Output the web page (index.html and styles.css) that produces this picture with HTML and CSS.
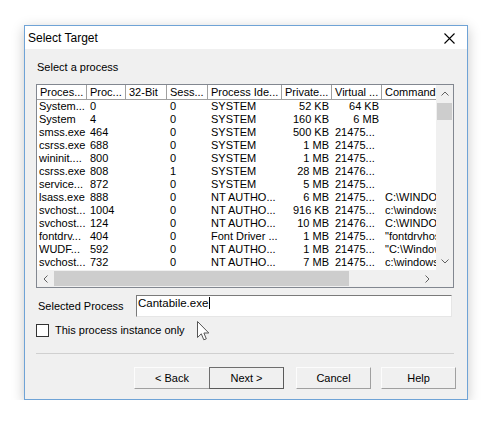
FILE: index.html
```html
<!DOCTYPE html>
<html>
<head>
<meta charset="utf-8">
<link rel="stylesheet" href="styles.css">
</head>
<body>
<div class="window">
  <div class="titlebar">
    <span class="title">Select Target</span>
    <svg class="close" width="11" height="11" viewBox="0 0 11 11"><path d="M0.5 0.5 L10.5 10.5 M10.5 0.5 L0.5 10.5" stroke="#000" stroke-width="1.1" fill="none"/></svg>
  </div>
  <div class="body">
    <div class="caption">Select a process</div>
    <div class="listview">
      <div class="main">
        <div class="row header">
          <div class="c">Proces...</div>
          <div class="c">Proc...</div>
          <div class="c">32-Bit</div>
          <div class="c">Sess...</div>
          <div class="c">Process Ide...</div>
          <div class="c">Private...</div>
          <div class="c">Virtual ...</div>
          <div class="c">Command</div>
        </div>
        <div class="rows">
          <div class="row"><div class="c">System...</div><div class="c">0</div><div class="c"></div><div class="c">0</div><div class="c">SYSTEM</div><div class="c r">52 KB</div><div class="c r">64 KB</div><div class="c"></div></div>
          <div class="row"><div class="c">System</div><div class="c">4</div><div class="c"></div><div class="c">0</div><div class="c">SYSTEM</div><div class="c r">160 KB</div><div class="c r">6 MB</div><div class="c"></div></div>
          <div class="row"><div class="c">smss.exe</div><div class="c">464</div><div class="c"></div><div class="c">0</div><div class="c">SYSTEM</div><div class="c r">500 KB</div><div class="c">21475...</div><div class="c"></div></div>
          <div class="row"><div class="c">csrss.exe</div><div class="c">688</div><div class="c"></div><div class="c">0</div><div class="c">SYSTEM</div><div class="c r">1 MB</div><div class="c">21475...</div><div class="c"></div></div>
          <div class="row"><div class="c">wininit....</div><div class="c">800</div><div class="c"></div><div class="c">0</div><div class="c">SYSTEM</div><div class="c r">1 MB</div><div class="c">21475...</div><div class="c"></div></div>
          <div class="row"><div class="c">csrss.exe</div><div class="c">808</div><div class="c"></div><div class="c">1</div><div class="c">SYSTEM</div><div class="c r">28 MB</div><div class="c">21476...</div><div class="c"></div></div>
          <div class="row"><div class="c">service...</div><div class="c">872</div><div class="c"></div><div class="c">0</div><div class="c">SYSTEM</div><div class="c r">5 MB</div><div class="c">21475...</div><div class="c"></div></div>
          <div class="row"><div class="c">lsass.exe</div><div class="c">888</div><div class="c"></div><div class="c">0</div><div class="c">NT AUTHO...</div><div class="c r">6 MB</div><div class="c">21475...</div><div class="c">C:\WINDOWS\system32\lsass.exe</div></div>
          <div class="row"><div class="c">svchost...</div><div class="c">1004</div><div class="c"></div><div class="c">0</div><div class="c">NT AUTHO...</div><div class="c r">916 KB</div><div class="c">21475...</div><div class="c">c:\windows\system32\svchost.exe</div></div>
          <div class="row"><div class="c">svchost...</div><div class="c">124</div><div class="c"></div><div class="c">0</div><div class="c">NT AUTHO...</div><div class="c r">10 MB</div><div class="c">21476...</div><div class="c">C:\WINDOWS\system32\svchost.exe</div></div>
          <div class="row"><div class="c">fontdrv...</div><div class="c">404</div><div class="c"></div><div class="c">0</div><div class="c">Font Driver ...</div><div class="c r">1 MB</div><div class="c">21475...</div><div class="c">"fontdrvhost.exe"</div></div>
          <div class="row"><div class="c">WUDF...</div><div class="c">592</div><div class="c"></div><div class="c">0</div><div class="c">NT AUTHO...</div><div class="c r">1 MB</div><div class="c">21475...</div><div class="c">"C:\Windows\System32\WUDFHost.exe"</div></div>
          <div class="row"><div class="c">svchost...</div><div class="c">732</div><div class="c"></div><div class="c">0</div><div class="c">NT AUTHO...</div><div class="c r">7 MB</div><div class="c">21475...</div><div class="c">c:\windows\system32\svchost.exe</div></div>
        </div>
      </div>
      <div class="vscroll">
        <div class="arrow"><svg width="8" height="5" viewBox="0 0 8 5"><path d="M0.5 4.5 L4 1 L7.5 4.5" stroke="#606060" fill="none"/></svg></div>
        <div class="vthumb"></div>
        <div class="vtrack"></div>
        <div class="arrow"><svg width="8" height="5" viewBox="0 0 8 5"><path d="M0.5 0.5 L4 4 L7.5 0.5" stroke="#606060" fill="none"/></svg></div>
      </div>
      <div class="hscroll">
        <div class="arrow"><svg width="5" height="8" viewBox="0 0 5 8"><path d="M4.5 0.5 L1 4 L4.5 7.5" stroke="#606060" fill="none"/></svg></div>
        <div class="hthumb"></div>
        <div class="htrack"></div>
        <div class="arrow"><svg width="5" height="8" viewBox="0 0 5 8"><path d="M0.5 0.5 L4 4 L0.5 7.5" stroke="#606060" fill="none"/></svg></div>
      </div>
      <div class="corner"></div>
    </div>
    <div class="selected">
      <span class="sel-label">Selected Process</span>
      <div class="textbox">Cantabile.exe<span class="caret"></span></div>
    </div>
    <div class="check-row">
      <span class="checkbox"></span>
      <span class="check-label">This process instance only</span>
    </div>
    <div class="separator"></div>
    <div class="buttons">
      <div class="btn back">&lt; Back</div>
      <div class="btn default">Next &gt;</div>
      <div class="btn cancel">Cancel</div>
      <div class="btn help">Help</div>
    </div>
  </div>
  <svg class="cursor" width="13" height="21" viewBox="0 0 13 21"><path d="M0.5 0.5 L0.5 16.5 L4.3 12.8 L6.8 18.8 L9.3 17.8 L6.9 12 L11.8 12 Z" fill="#fff" stroke="#555" stroke-width="1" stroke-linejoin="miter"/></svg>
</div>
</body>
</html>
```

FILE: styles.css
```css
html, body {
  margin: 0;
  padding: 0;
  background: #ffffff;
}

body {
  font-family: "Liberation Sans", Arial, sans-serif;
  font-size: 11px;
  color: #000;
}

.window {
  position: relative;
  margin: 25px 0 0 24px;
  width: 442px;
  border: 1px solid #6fa3d6;
  box-shadow: 0 3px 12px rgba(0, 0, 0, 0.22);
}

.titlebar {
  height: 23px;
  background: #fff;
  display: flex;
  align-items: center;
  justify-content: space-between;
  padding: 0 12px 0 3px;
}

.title {
  font-size: 12px;
  line-height: 14px;
  padding-top: 1px;
}

.close {
  display: block;
  margin-top: 1px;
}

.body {
  background: #f0f0f0;
  padding: 12px 13px 10px 11px;
}

.caption {
  line-height: 13px;
  padding-left: 1px;
}

.listview {
  margin-top: 10px;
  width: 416px;
  border: 1px solid #828790;
  background: #fff;
  display: grid;
  grid-template-columns: 399px 17px;
  grid-template-rows: 185px 17px;
}

.main {
  overflow: hidden;
  background: #fff;
}

.row {
  display: grid;
  grid-template-columns: 50px 39px 41px 41px 74px 50px 50px 320px;
  height: 13px;
  line-height: 13px;
  white-space: nowrap;
}

.row .c {
  overflow: hidden;
  padding: 0 3px;
}

.row .c:first-child {
  padding-left: 2px;
}

.row .c.r {
  text-align: right;
}

.header {
  height: 14px;
  line-height: 14px;
  border-bottom: 1px solid #a0a0a0;
}

.header .c {
  border-right: 1px solid #a0a0a0;
  padding: 0 3px 0 3px;
}

.header .c:first-child {
  padding-left: 3px;
}

.vscroll {
  background: #f0f0f0;
  display: flex;
  flex-direction: column;
}

.vscroll .arrow {
  height: 17px;
  display: flex;
  align-items: center;
  justify-content: center;
}

.vthumb {
  height: 17px;
  background: #cdcdcd;
  margin: 1px 1px 0 1px;
}

.vtrack {
  flex: 1;
}

.hscroll {
  background: #f0f0f0;
  display: flex;
}

.hscroll .arrow {
  width: 17px;
  display: flex;
  align-items: center;
  justify-content: center;
}

.hthumb {
  width: 295px;
  background: #cdcdcd;
  margin: 1px 0;
}

.htrack {
  flex: 1;
}

.corner {
  background: #f0f0f0;
}

.selected {
  margin-top: 7px;
  display: flex;
  align-items: center;
}

.sel-label {
  width: 100px;
  padding-left: 2px;
  box-sizing: border-box;
}

.textbox {
  width: 316px;
  height: 22px;
  box-sizing: border-box;
  background: #fff;
  border-top: 1px solid #7a7a7a;
  border-left: 1px solid #7a7a7a;
  border-right: 1px solid #e6e6e6;
  border-bottom: 1px solid #e6e6e6;
  padding: 1px 0 0 1px;
  line-height: 13px;
  font-size: 11.5px;
}

.caret {
  display: inline-block;
  width: 1px;
  height: 12px;
  background: #000;
  vertical-align: -2px;
  margin-left: 1px;
}

.check-row {
  margin-top: 7px;
  display: flex;
  align-items: center;
  height: 13px;
}

.checkbox {
  width: 13px;
  height: 13px;
  box-sizing: border-box;
  border: 1px solid #333;
  background: #fff;
}

.check-label {
  margin-left: 6px;
  line-height: 13px;
}

.separator {
  margin-top: 16px;
  border-top: 1px solid #d0d0d0;
}

.buttons {
  margin-top: 13px;
  display: flex;
  padding-left: 98px;
  margin-right: -2px;
}

.btn {
  width: 75px;
  height: 22px;
  box-sizing: border-box;
  display: flex;
  align-items: center;
  justify-content: center;
  background: #f0f0f0;
  border-top: 1px solid #fcfcfc;
  border-left: 1px solid #fcfcfc;
  border-right: 1px solid #a0a0a0;
  border-bottom: 1px solid #a0a0a0;
}

.btn.back {
  border-right: none;
}

.btn.default {
  border: 1px solid #6e6e6e;
  border-right-color: #5a5a5a;
  border-bottom-color: #5a5a5a;
}

.btn.cancel {
  margin-left: 12px;
}

.btn.help {
  margin-left: 10px;
}

.cursor {
  position: absolute;
  left: 172px;
  top: 295px;
}
```
